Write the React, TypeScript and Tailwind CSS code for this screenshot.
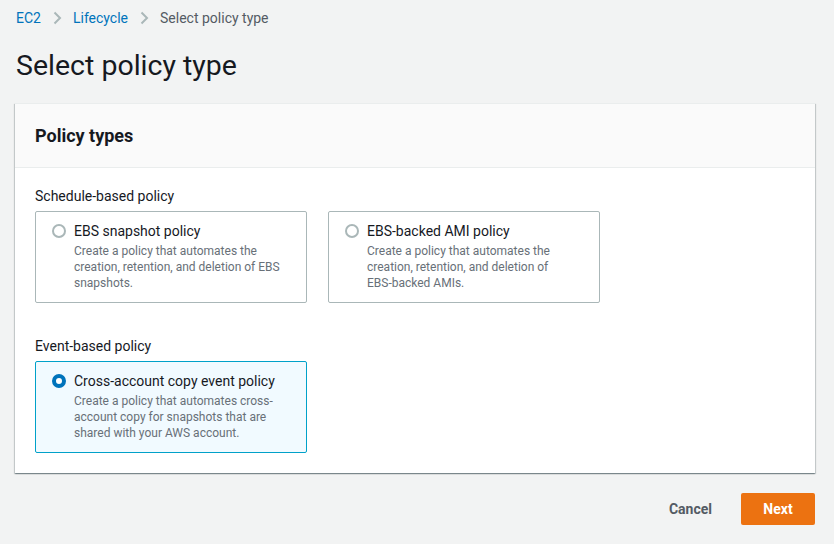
import React from "react";

const font = { fontFamily: "Roboto, 'Liberation Sans', sans-serif" };

function Chevron() {
  return (
    <svg width="16" height="16" viewBox="0 0 16 16" className="mx-[8px]">
      <path d="M5.5 2.5 L11 8 L5.5 13.5" fill="none" stroke="#aab7b8" strokeWidth="2" />
    </svg>
  );
}

function Card({ title, desc, selected }: { title: string; desc: React.ReactNode; selected?: boolean }) {
  return (
    <div
      className={
        "w-[272px] h-[92px] rounded-[2px] border pl-[16px] pr-[12px] pt-[9px] " +
        (selected ? "border-[#00a1c9] bg-[#f1faff]" : "border-[#aab7b8] bg-white")
      }
    >
      <div className="flex items-start">
        {selected ? (
          <div className="mt-[3px] w-[14px] h-[14px] rounded-full border-[4px] border-[#0073bb] bg-white shrink-0" />
        ) : (
          <div className="mt-[3px] w-[14px] h-[14px] rounded-full border-2 border-[#aab7b8] bg-white shrink-0" />
        )}
        <div className="ml-[8px]">
          <div className="text-[14px] leading-[20px] text-[#16191f]">{title}</div>
          <div className="mt-[2px] text-[12px] leading-[16px] text-[#687078]">{desc}</div>
        </div>
      </div>
    </div>
  );
}

export default function App() {
  return (
    <div className="w-[834px] h-[544px] bg-[#f2f3f3] overflow-hidden" style={font}>
      <div className="px-[16px]">
        <div className="flex items-center h-[36px] text-[14px]">
          <span className="text-[#0073bb]">EC2</span>
          <Chevron />
          <span className="text-[#0073bb]">Lifecycle</span>
          <Chevron />
          <span className="text-[#545b64]">Select policy type</span>
        </div>
        <h1 className="text-[28.5px] leading-[36px] text-[#16191f] mt-[12px]">Select policy type</h1>
      </div>
      <div className="mx-[15px] mt-[19px] w-[800px] bg-white shadow-[0_1px_1px_0_rgba(0,28,36,0.3),1px_1px_1px_0_rgba(0,28,36,0.15),-1px_1px_1px_0_rgba(0,28,36,0.15)] border-t border-[#eaeded]">
        <div className="h-[64px] bg-[#fafafa] border-b border-[#eaeded] flex items-center px-[20px]">
          <h2 className="text-[18px] font-bold text-[#16191f]">Policy types</h2>
        </div>
        <div className="px-[20px] pt-[18px] pb-[20px]">
          <div className="text-[14px] leading-[20px] text-[#16191f] mb-[5px]">Schedule-based policy</div>
          <div className="flex gap-[21px]">
            <Card
              title="EBS snapshot policy"
              desc={<>Create a policy that automates the<br />creation, retention, and deletion of EBS<br />snapshots.</>}
            />
            <Card
              title="EBS-backed AMI policy"
              desc={<>Create a policy that automates the<br />creation, retention, and deletion of<br />EBS-backed AMIs.</>}
            />
          </div>
          <div className="text-[14px] leading-[20px] text-[#16191f] mt-[33px] mb-[5px]">Event-based policy</div>
          <Card
            selected
            title="Cross-account copy event policy"
            desc={<>Create a policy that automates cross-<br />account copy for snapshots that are<br />shared with your AWS account.</>}
          />
        </div>
      </div>
      <div className="flex justify-end items-center mr-[19px] mt-[20px] gap-[29px]">
        <button className="text-[14px] font-bold text-[#545b64]">Cancel</button>
        <button className="w-[74px] h-[32px] bg-[#ec7211] rounded-[2px] text-[14px] font-bold text-white">Next</button>
      </div>
    </div>
  );
}
